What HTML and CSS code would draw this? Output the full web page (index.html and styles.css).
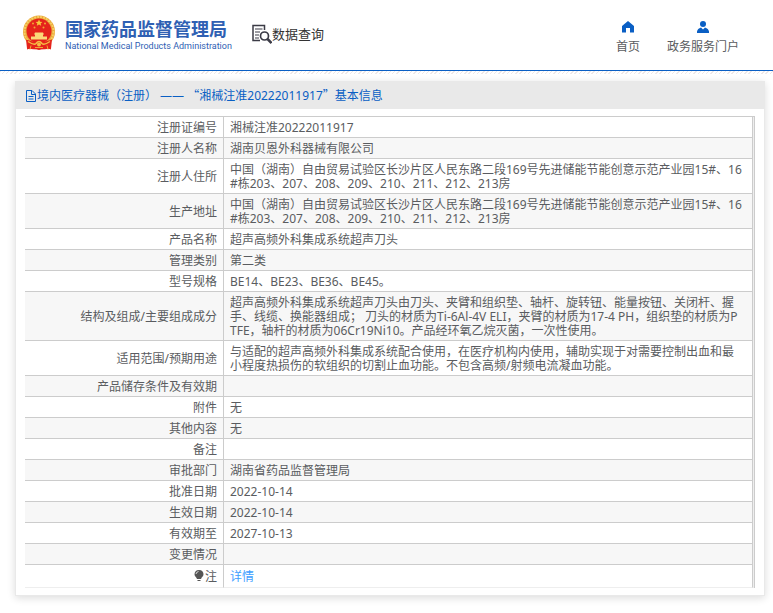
FILE: index.html
```html
<!DOCTYPE html>
<html lang="zh-CN">
<head>
    <meta charset="UTF-8">
    <meta name="viewport" content="width=device-width, initial-scale=1.0">
    <title>国家药品监督管理局 数据查询</title>
    <link rel="stylesheet" href="styles.css">
</head>
<body>
    <header class="header">
        <a class="logo" href="#">
            <svg class="emblem" viewBox="0 0 32 35" aria-hidden="true">
                <path d="M5 24 L4 34 L10 32 L16 34.500 L22 32 L28 34 L27 24 Z" fill="#d9261c"/>
                <circle cx="16" cy="16" r="16" fill="#e9a63a"/>
                <circle cx="16" cy="16" r="14.500" fill="none" stroke="#f6cf62" stroke-width="2" stroke-dasharray="2 1"/>
                <circle cx="16" cy="15.500" r="12.500" fill="#e5231b"/>
                <path d="M16 4 l1 2.200 2.400.2 -1.800 1.600 .6 2.300 -2.200-1.200 -2.200 1.200 .6-2.300 -1.800-1.600 2.400-.2z" fill="#f8c83c"/>
                <g fill="#f2a733">
                    <circle cx="10" cy="8" r="1"/>
                    <circle cx="22" cy="8" r="1"/>
                    <circle cx="11.500" cy="12" r="1"/>
                    <circle cx="20.500" cy="12" r="1"/>
                </g>
                <path d="M12 17 h8 l1 2 h-10z M12 19 h8 v2 h4 v3 h-16 v-3 h4z" fill="#fbd878"/>
                <path d="M3 24 q13 5 26 0 l-1 9 q-12 2 -24 0z" fill="#e5231b"/>
                <path d="M5 26 q6 4 8 2 q3-4 6 0 q2 2 8-2" fill="none" stroke="#f5bd45" stroke-width="1.500"/>
                <circle cx="16" cy="29" r="2" fill="#f5bd45"/>
                <path d="M8 30 l-1 4 M24 30 l1 4 M12 32 h8" stroke="#f0a834" stroke-width="1"/>
            </svg>
            <span class="logo-text">
                <span class="logo-cn">国家药品监督管理局</span>
                <span class="logo-en">National Medical Products Administration</span>
            </span>
        </a>
        <a class="search-title" href="#">
            <svg class="search-icon" viewBox="0 0 20 20" fill="none" stroke="#3b3b46" aria-hidden="true">
                <path d="M8 16.500 H1 V1.500 H12.500 V6" stroke-width="1.500"/>
                <path d="M3 5 H10.500 M3 8 H8 M3 11 H7 M3 14 H7" stroke-width="1.200"/>
                <circle cx="12.500" cy="12" r="4" stroke-width="1.700"/>
                <path d="M15.500 15 L19.500 19" stroke-width="2.500"/>
            </svg>
            <span>数据查询</span>
        </a>
        <nav class="nav">
            <a href="#">
                <svg class="nav-icon" viewBox="0 0 12 12" aria-hidden="true">
                    <path d="M6 0 L12 5 V11.500 H8 V7 H4 V11.500 H0 V5 Z" fill="#0a5fc4"/>
                </svg>
                <span>首页</span>
            </a>
            <a href="#">
                <svg class="nav-icon" viewBox="0 0 12 12" aria-hidden="true">
                    <circle cx="6" cy="3" r="3" fill="#0a5fc4"/>
                    <path d="M0 12 V10.500 Q0.500 7.500 4 6.500 L6 8.500 L8 6.500 Q11.500 7.500 12 10.500 V12 Z" fill="#0a5fc4"/>
                </svg>
                <span>政务服务门户</span>
            </a>
        </nav>
    </header>
    <div class="header-strip"></div>

    <main class="panel">
        <h1 class="panel-title">
            <svg class="doc-icon" viewBox="0 0 12 12" fill="none" stroke="#0a5fc4" aria-hidden="true">
                <path d="M1.500 .5 H7 L10.500 4 V11.500 H1.500 Z M6.500 .5 V4.500 H10.500 M3.500 6.500 H8.500 M3.500 9 H8.500"/>
            </svg>
            <span>境内医疗器械（注册） —— <span class="quote">“</span>湘械注准20222011917<span class="quote">”</span>基本信息</span>
        </h1>
        <div class="panel-body">
            <div class="table-wrap">
                <table class="info">
                    <tr><th scope="row">注册证编号</th><td>湘械注准20222011917</td></tr>
                    <tr><th scope="row">注册人名称</th><td>湖南贝恩外科器械有限公司</td></tr>
                    <tr><th scope="row">注册人住所</th><td>中国（湖南）自由贸易试验区长沙片区人民东路二段169号先进储能节能创意示范产业园15#、16#栋203、207、208、209、210、211、212、213房</td></tr>
                    <tr><th scope="row">生产地址</th><td>中国（湖南）自由贸易试验区长沙片区人民东路二段169号先进储能节能创意示范产业园15#、16#栋203、207、208、209、210、211、212、213房</td></tr>
                    <tr><th scope="row">产品名称</th><td>超声高频外科集成系统超声刀头</td></tr>
                    <tr><th scope="row">管理类别</th><td>第二类</td></tr>
                    <tr><th scope="row">型号规格</th><td>BE14、BE23、BE36、BE45。</td></tr>
                    <tr><th scope="row">结构及组成/主要组成成分</th><td>超声高频外科集成系统超声刀头由刀头、夹臂和组织垫、轴杆、旋转钮、能量按钮、关闭杆、握手、线缆、换能器组成； 刀头的材质为Ti-6Al-4V ELI，夹臂的材质为17-4 PH，组织垫的材质为PTFE，轴杆的材质为06Cr19Ni10。产品经环氧乙烷灭菌，一次性使用。</td></tr>
                    <tr><th scope="row">适用范围/预期用途</th><td>与适配的超声高频外科集成系统配合使用，在医疗机构内使用，辅助实现于对需要控制出血和最小程度热损伤的软组织的切割止血功能。不包含高频/射频电流凝血功能。</td></tr>
                    <tr><th scope="row">产品储存条件及有效期</th><td></td></tr>
                    <tr><th scope="row">附件</th><td>无</td></tr>
                    <tr><th scope="row">其他内容</th><td>无</td></tr>
                    <tr><th scope="row">备注</th><td></td></tr>
                    <tr><th scope="row">审批部门</th><td>湖南省药品监督管理局</td></tr>
                    <tr><th scope="row">批准日期</th><td>2022-10-14</td></tr>
                    <tr><th scope="row">生效日期</th><td>2022-10-14</td></tr>
                    <tr><th scope="row">有效期至</th><td>2027-10-13</td></tr>
                    <tr><th scope="row">变更情况</th><td></td></tr>
                    <tr class="note">
                        <th scope="row">
                            <svg class="bulb" viewBox="0 0 10 12" aria-hidden="true">
                                <path d="M5 0 C2 0 .5 2 .5 4.300 C.5 6.500 2.500 7 3 9 H7 C7.500 7 9.500 6.500 9.500 4.300 C9.500 2 8 0 5 0 Z M3.500 10 H6.500 V11 H3.500 Z" fill="#555"/>
                                <path d="M2 4 Q2.200 2 4.500 1.500" fill="none" stroke="#fff" stroke-width=".8"/>
                            </svg>注
                        </th>
                        <td><a href="#">详情</a></td>
                    </tr>
                </table>
            </div>
        </div>
    </main>
</body>
</html>
```
FILE: styles.css
```css
* {
    box-sizing: border-box;
}
body {
    margin: 0;
    font-family: "Noto Sans", "Noto Sans CJK SC", sans-serif;
    font-size: 12px;
    line-height: 14px;
    color: #5a5c60;
    background: #fff;
}
a {
    color: inherit;
    text-decoration: none;
}
svg {
    flex: none;
}
.header {
    display: flex;
    align-items: flex-start;
    padding: 15px 34px 16px 23px;
    border-bottom: 1px solid #0a5fc4;
}
/* faint dotted strip under the header line */
.header-strip {
    height: 3px;
    background: repeating-linear-gradient(135deg, #eee8e8 0, #eee8e8 1px, #fff 1px, #fff 3px);
}
.logo {
    display: flex;
    gap: 10px;
}
.emblem {
    width: 32px;
    height: 36px;
}
.logo-text {
    display: flex;
    flex-direction: column;
    padding-top: 4px;
    color: #2f60b3;
}
.logo-cn {
    font-size: 18px;
    line-height: 20px;
    font-weight: bold;
}
.logo-en {
    font-family: Roboto, sans-serif;
    font-size: 9px;
    line-height: 15px;
}
.search-title {
    display: flex;
    align-items: center;
    padding-top: 9px;
    margin-left: 20px;
    font-size: 13px;
    color: #333;
}
.search-icon {
    width: 20px;
    height: 20px;
}
.nav {
    display: flex;
    gap: 27px;
    margin-left: auto;
    padding-top: 6px;
}
.nav a {
    display: flex;
    flex-direction: column;
    align-items: center;
    gap: 7px;
}
.nav-icon {
    width: 12px;
    height: 12px;
}
.panel {
    margin: 7px 8px 17px 15px;
    border: 1px solid #e9e9e9;
    background: #fff;
    box-shadow: 0 2px 8px rgba(0, 0, 0, 0.14);
}
.panel-title {
    display: flex;
    align-items: center;
    margin: 0;
    padding: 6px 9px;
    font-size: 12px;
    line-height: 15px;
    font-weight: normal;
    color: #0a5fc4;
    background: #e9e9e9;
}
.quote {
    font-family: "Noto Sans CJK SC", sans-serif;
    line-height: 1;
}
.doc-icon {
    width: 12px;
    height: 12px;
}
.panel-body {
    padding: 7px 9px;
}
/* double line on the right edge of the table */
.table-wrap {
    padding-right: 1px;
    border-top: 1px solid #ccc;
    border-right: 1px solid #ccc;
    background: #eee;
}
.info {
    width: 100%;
    border-spacing: 0;
    background: #fff;
}
.info th,
.info td {
    padding: 4px 6px 2px;
    border-right: 1px solid #ccc;
    border-bottom: 1px solid #ccc;
    font-weight: normal;
    word-break: break-all;
}
.info th {
    width: 199px;
    text-align: right;
}
.info td {
    padding-right: 9px;
    text-align: left;
}
.info tr:nth-child(even) {
    background: #f7f7f7;
}
.info .note th,
.info .note td {
    padding-top: 5px;
    padding-bottom: 3px;
    border-bottom-color: #eee;
}
.note a {
    color: #409eff;
}
.bulb {
    width: 10px;
    height: 12px;
    margin-right: 1px;
    vertical-align: -1px;
}
```
